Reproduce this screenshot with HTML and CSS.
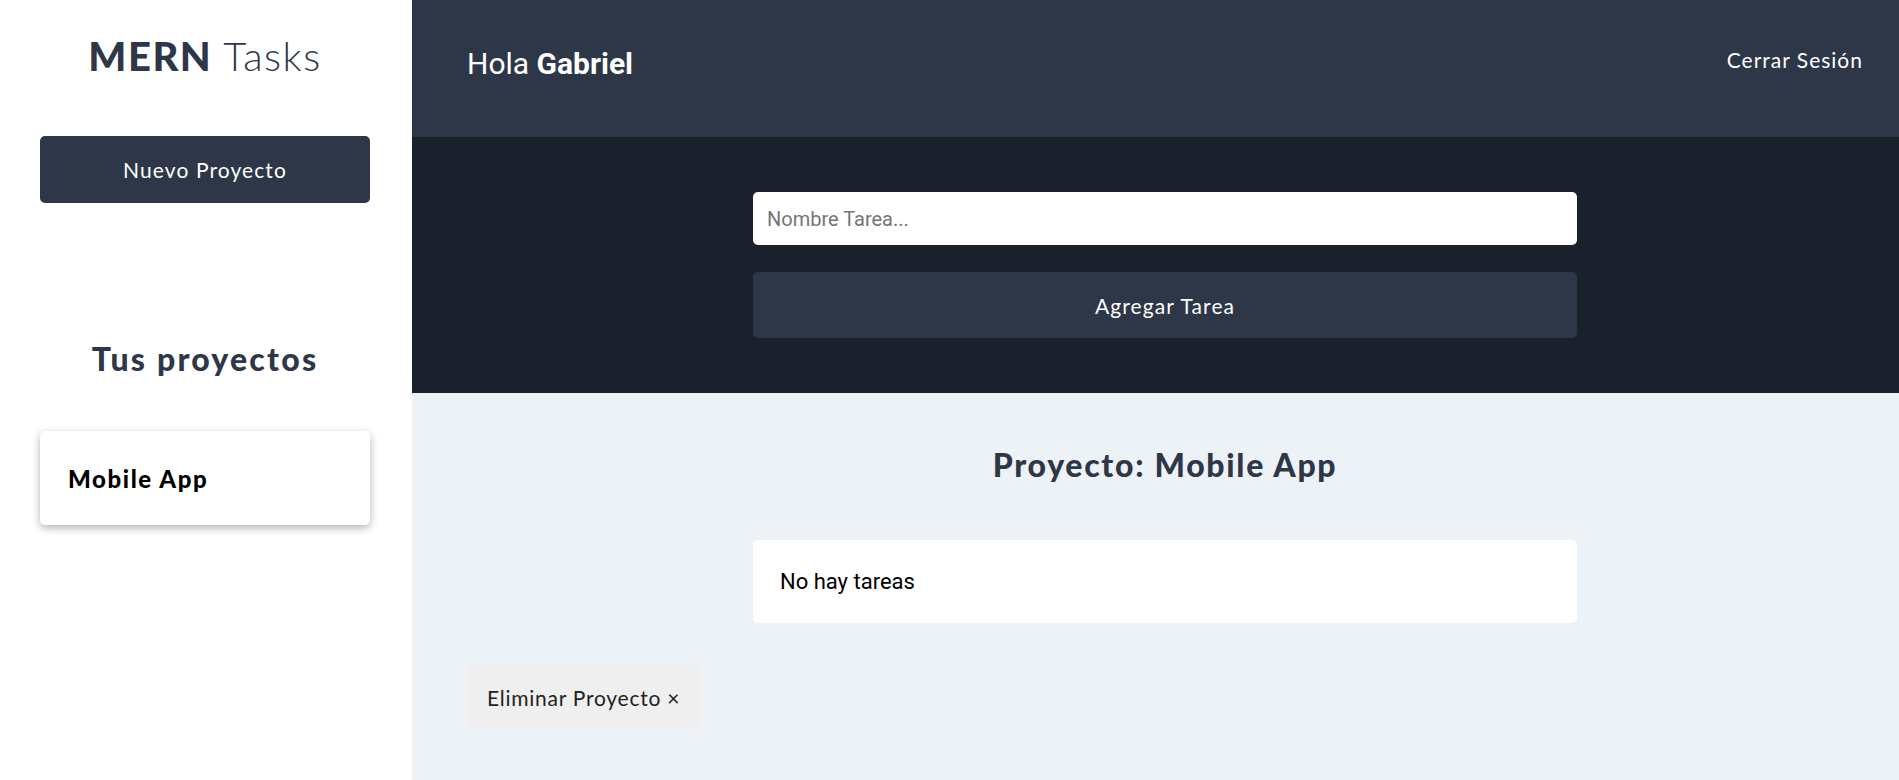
FILE: index.html
```html
<!DOCTYPE html>
<html lang="es">
<head>
<meta charset="utf-8">
<title>MERN Tasks</title>
<link rel="stylesheet" href="styles.css">
</head>
<body>
<div class="app">
  <aside class="sidebar">
    <h1 class="logo">MERN <span>Tasks</span></h1>
    <button class="btn btn-primary btn-block">Nuevo Proyecto</button>
    <h2 class="sidebar-title">Tus proyectos</h2>
    <ul class="project-list">
      <li class="project-item">Mobile App</li>
    </ul>
  </aside>
  <main class="main">
    <header class="app-header">
      <p class="user-name">Hola <strong>Gabriel</strong></p>
      <nav class="nav"><a class="logout" href="#">Cerrar Sesión</a></nav>
    </header>
    <section class="task-form">
      <div class="form-inner">
        <input class="task-input" type="text" placeholder="Nombre Tarea...">
        <button class="btn btn-primary btn-block btn-add">Agregar Tarea</button>
      </div>
    </section>
    <section class="tasks">
      <h2 class="project-title">Proyecto: Mobile App</h2>
      <ul class="task-list">
        <li class="task-empty">No hay tareas</li>
      </ul>
      <button class="btn btn-delete">Eliminar Proyecto &times;</button>
    </section>
  </main>
</div>
</body>
</html>
```
FILE: styles.css
```css
* { box-sizing: border-box; }
html, body { margin: 0; padding: 0; }
body {
  font-family: Roboto, "Liberation Sans", sans-serif;
  font-size: 20px;
  color: #000;
  background: #edf2f7;
}
.app { display: flex; min-height: 780px; }

.sidebar {
  flex: 0 0 412px;
  background: #fff;
  padding: 32px 42px 40px 40px;
}
.logo {
  margin: 0;
  font-family: Lato, sans-serif;
  font-weight: 900;
  font-size: 40px;
  line-height: 48px;
  letter-spacing: 1.5px;
  text-align: center;
  color: #2d3748;
}
.logo span { font-weight: 300; }

.btn {
  border: none;
  cursor: pointer;
  font-family: Lato, sans-serif;
  font-size: 21px;
  letter-spacing: 1.1px;
  border-radius: 5px;
}
.btn-primary { background: #2d3748; color: #fff; }
.btn-block { display: block; width: 100%; }
.sidebar .btn-primary { margin-top: 56px; height: 67px; }

.sidebar-title {
  margin: 136px 0 0;
  font-family: Lato, sans-serif;
  font-weight: 900;
  font-size: 32px;
  line-height: 40px;
  letter-spacing: 2.2px;
  text-align: center;
  color: #2d3748;
}
.project-list { list-style: none; margin: 52px 0 0; padding: 0; }
.project-item {
  background: #fff;
  border-radius: 5px;
  box-shadow: 0 3px 8px rgba(0,0,0,0.3);
  height: 94px;
  padding: 0 28px;
  display: flex;
  align-items: center;
  font-family: Lato, sans-serif;
  font-weight: 900;
  font-size: 24px;
  letter-spacing: 1.6px;
  color: #000;
}

.main { flex: 1; display: flex; flex-direction: column; }
.app-header {
  height: 137px;
  background: #2d3748;
  display: flex;
  justify-content: space-between;
  align-items: flex-start;
  padding: 0 36px 0 55px;
}
.user-name {
  margin: 0;
  padding-top: 46px;
  color: #fff;
  font-size: 30px;
  line-height: 36px;
}
.user-name strong { font-weight: 700; }
.logout {
  display: block;
  padding-top: 47px;
  color: #fff;
  text-decoration: none;
  font-family: Lato, sans-serif;
  font-size: 21px;
  line-height: 26px;
  letter-spacing: 1px;
}

.task-form {
  height: 256px;
  background: #1a202c;
  padding: 55px 322px 0 341px;
}
.task-input {
  display: block;
  width: 100%;
  height: 53px;
  border: none;
  border-radius: 5px;
  padding: 0 14px;
  font-family: Roboto, sans-serif;
  font-size: 20px;
  color: #000;
  outline: none;
}
.task-input::placeholder { color: #757575; }
.btn-add { margin-top: 27px; height: 66px; }

.tasks { padding: 0 322px 40px 55px; }
.project-title {
  margin: 52px 0 0 286px;
  font-family: Lato, sans-serif;
  font-weight: 900;
  font-size: 32px;
  line-height: 40px;
  letter-spacing: 1.7px;
  text-align: center;
  color: #2d3748;
}
.task-list { list-style: none; margin: 55px 0 0 286px; padding: 0; }
.task-empty {
  background: #fff;
  border-radius: 5px;
  height: 83px;
  padding: 0 27px;
  display: flex;
  align-items: center;
  font-size: 22px;
}
.btn-delete {
  margin-top: 41px;
  height: 66px;
  padding: 0 20px;
  background: #efefef;
  color: #222;
  font-size: 21px;
  letter-spacing: 0.75px;
}
```
